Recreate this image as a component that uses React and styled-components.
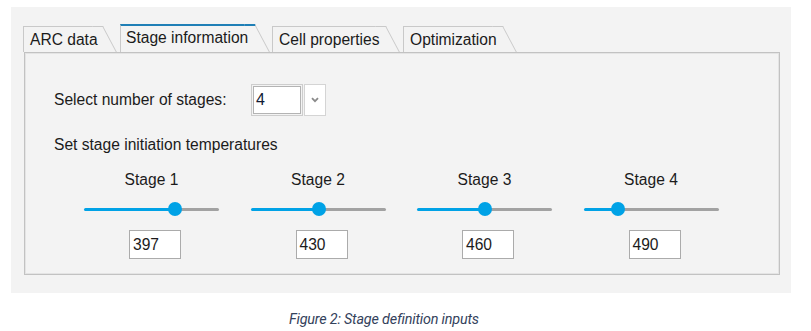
import React from 'react';
import styled, { createGlobalStyle } from 'styled-components';

const GlobalStyle = createGlobalStyle`
  body {
    margin: 0;
    background: #ffffff;
    font-family: "Liberation Sans", Arial, sans-serif;
  }
`

const Page = styled.div`
  width: 811px;
  height: 331px;
  overflow: hidden;
`

const Panel = styled.div`
  box-sizing: border-box;
  margin: 7px 0 0 11px;
  width: 780px;
  height: 286px;
  padding: 17px 0 0 12px;
  background: #f3f3f3;
`

const TabStrip = styled.div`
  display: flex;
  align-items: flex-end;
  height: 28px;
`

const Tab = styled.div`
  position: relative;
  z-index: 0;
  box-sizing: border-box;
  display: flex;
  align-items: center;
  width: ${p => p.$w}px;
  height: ${p => (p.$active ? 28 : 26)}px;
  margin-right: 17px;
  padding: 0 0 ${p => (p.$active ? 2 : 0)}px ${p => (p.$active ? 5 : 6)}px;
  border-left: 1px solid #c9c9c9;
  border-top: ${p => (p.$active ? '2px solid #1f7fb6' : '1px solid #c9c9c9')};
  background: #f3f3f3;
  font-size: 15.6px;
  color: #1b1b1b;
  white-space: nowrap;

  &::after {
    content: '';
    position: absolute;
    z-index: -1;
    top: ${p => (p.$active ? -2 : -1)}px;
    right: 0;
    bottom: 0;
    width: 10px;
    border-top: ${p => (p.$active ? '2px solid #1f7fb6' : '1px solid #c9c9c9')};
    border-right: 1px solid #c9c9c9;
    background: #f3f3f3;
    transform-origin: top left;
    transform: skewX(28deg);
  }
`

const TabBody = styled.div`
  box-sizing: border-box;
  margin-left: 1px;
  width: 756px;
  height: 223px;
  padding: 31px 0 0 29px;
  border: 1px solid #c2c2c2;
  box-shadow: inset 1px 1px 0 #e4e4e4, inset -1px -1px 0 #e4e4e4;
  font-size: 15.6px;
  color: #1b1b1b;
`

const SelectRow = styled.div`
  display: flex;
  align-items: center;
  height: 32px;
`

const FieldLabel = styled.div`
  width: 197px;
`

const ComboValue = styled.div`
  box-sizing: border-box;
  display: flex;
  align-items: center;
  width: 52px;
  height: 32px;
  padding-left: 4px;
  border: 1px solid #cdcdcd;
  box-shadow: inset 0 0 0 1px #f3f3f3, inset 0 0 0 2px #b3b3b3;
  background: #ffffff;
  font-size: 16px;
  color: #111a33;
`

const ComboButton = styled.div`
  box-sizing: border-box;
  display: flex;
  align-items: center;
  justify-content: center;
  width: 22px;
  height: 32px;
  margin-left: 1px;
  border: 1px solid #d4d4d4;
  background: #ffffff;
`

const Heading = styled.div`
  margin-top: 20px;
  line-height: 18px;
`

const StageGrid = styled.div`
  display: grid;
  grid-template-columns: repeat(4, 135px);
  column-gap: 31.5px;
  margin: 17px 0 0 30px;
`

const StageColumn = styled.div`
  display: flex;
  flex-direction: column;
  align-items: center;
`

const StageLabel = styled.div`
  line-height: 18px;
`

const Slider = styled.div`
  position: relative;
  display: flex;
  align-items: center;
  width: 135px;
  height: 16px;
  margin-top: 12px;
`

const Fill = styled.div`
  height: 3px;
  background: #00a2e6;
  border-radius: 2px 0 0 2px;
`

const Rest = styled.div`
  flex: 1;
  height: 3px;
  background: #a2a2a2;
  border-radius: 0 2px 2px 0;
`

const Thumb = styled.div`
  position: absolute;
  top: 1px;
  width: 14px;
  height: 14px;
  margin-left: -7px;
  border-radius: 50%;
  background: #00a2e6;
`

const ValueBox = styled.div`
  box-sizing: border-box;
  display: flex;
  align-items: center;
  width: 52px;
  height: 29px;
  margin: 13px 0 0 7px;
  padding-left: 3px;
  border: 1px solid #ababab;
  background: #ffffff;
  color: #1b1b1b;
`

const Caption = styled.div`
  margin: 18px 0 0 289px;
  line-height: 18px;
  font-family: Roboto, "Liberation Sans", sans-serif;
  font-style: italic;
  font-size: 14.4px;
  letter-spacing: -0.2px;
  color: #34425c;
`

const tabs = [
  { name: 'ARC data', w: 80 },
  { name: 'Stage information', w: 135, active: true },
  { name: 'Cell properties', w: 114 },
  { name: 'Optimization', w: 100 },
]

const stages = [
  { name: 'Stage 1', value: '397', pos: 0.674 },
  { name: 'Stage 2', value: '430', pos: 0.504 },
  { name: 'Stage 3', value: '460', pos: 0.504 },
  { name: 'Stage 4', value: '490', pos: 0.252 },
]

const Chevron = () => (
  <svg width="8" height="6" viewBox="0 0 8 6">
    <path d="M1 1.2 L4 4.2 L7 1.2" fill="none" stroke="#8a8a8a" strokeWidth="1.8" />
  </svg>
)

const StageSlider = ({ pos }) => (
  <Slider>
    <Fill style={{ width: `${pos * 100}%` }} />
    <Rest />
    <Thumb style={{ left: `${pos * 100}%` }} />
  </Slider>
)

const App = () => (
  <Page>
    <GlobalStyle />
    <Panel>
      <TabStrip>
        {tabs.map(t => (
          <Tab key={t.name} $w={t.w} $active={t.active}>{t.name}</Tab>
        ))}
      </TabStrip>
      <TabBody>
        <SelectRow>
          <FieldLabel>Select number of stages:</FieldLabel>
          <ComboValue>4</ComboValue>
          <ComboButton><Chevron /></ComboButton>
        </SelectRow>
        <Heading>Set stage initiation temperatures</Heading>
        <StageGrid>
          {stages.map(s => (
            <StageColumn key={s.name}>
              <StageLabel>{s.name}</StageLabel>
              <StageSlider pos={s.pos} />
              <ValueBox>{s.value}</ValueBox>
            </StageColumn>
          ))}
        </StageGrid>
      </TabBody>
    </Panel>
    <Caption>Figure 2: Stage definition inputs</Caption>
  </Page>
)

export default App;
